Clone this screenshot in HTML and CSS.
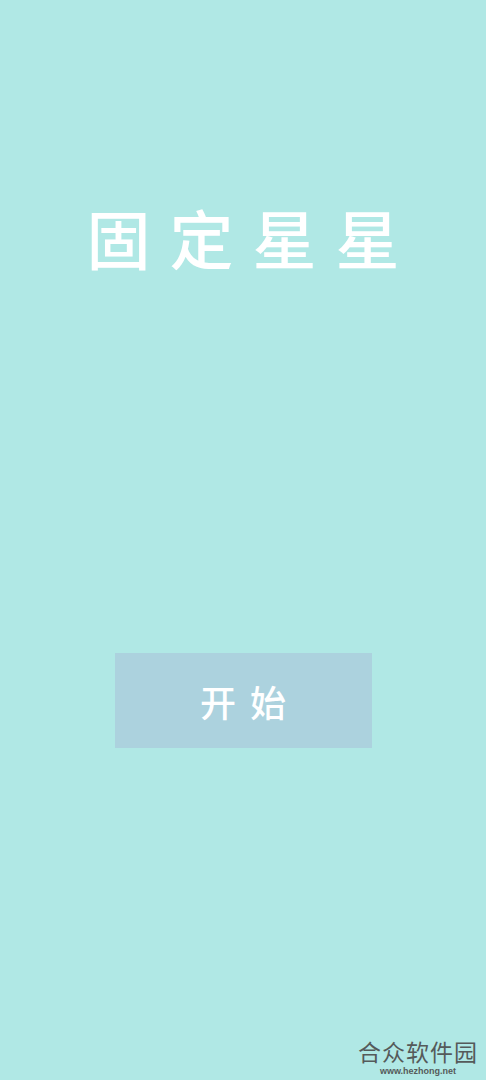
FILE: index.html
```html
<!DOCTYPE html>
<html lang="zh">
<head>
<meta charset="utf-8">
<link rel="stylesheet" href="styles.css">
</head>
<body>
<main class="screen">
  <h1 class="title">固定星星</h1>
  <button class="start">开始</button>
  <div class="watermark">
    <div class="wm-name">合众软件园</div>
    <div class="wm-url">www.hezhong.net</div>
  </div>
</main>
</body>
</html>
```
FILE: styles.css
```css
html, body {
  margin: 0;
  padding: 0;
}
body {
  background: #b0e8e5;
  font-family: "Noto Sans CJK SC", "Noto Sans", sans-serif;
}
.screen {
  position: relative;
  width: 486px;
  height: 1080px;
  display: flex;
  flex-direction: column;
  align-items: center;
  overflow: hidden;
}
.title {
  margin: 204px 0 0 0;
  font-size: 64px;
  line-height: 64px;
  font-weight: 500;
  color: #ffffff;
  letter-spacing: 19px;
  padding-left: 19px;
}
.start {
  margin-top: 385px;
  width: 257px;
  height: 95px;
  border: none;
  background: #acd2de;
  color: #ffffff;
  font-family: "Noto Sans CJK SC", "Noto Sans", sans-serif;
  font-size: 36px;
  font-weight: 500;
  letter-spacing: 14px;
  padding: 0 0 0 14px;
}
.watermark {
  position: absolute;
  right: 8px;
  bottom: 4px;
  display: flex;
  flex-direction: column;
  align-items: center;
  gap: 3px;
}
.wm-name {
  font-size: 23px;
  line-height: 24px;
  color: #555a5a;
  letter-spacing: 1px;
}
.wm-url {
  font-family: "Liberation Sans", sans-serif;
  font-size: 9px;
  font-weight: bold;
  line-height: 10px;
  color: #555a5a;
}
```
